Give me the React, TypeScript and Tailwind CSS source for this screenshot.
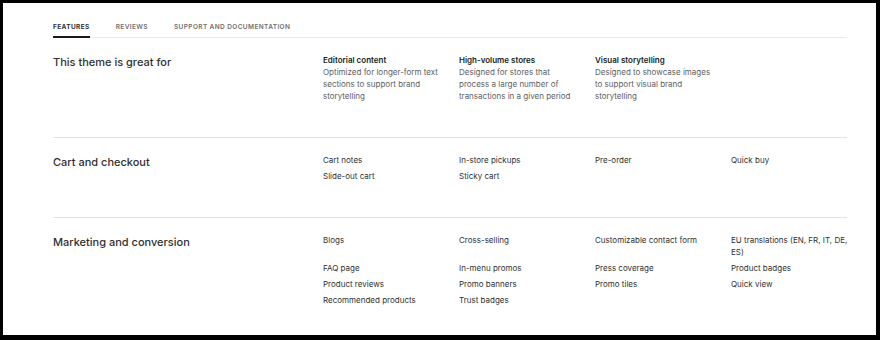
import React from "react";

const highlights = [
  {
    title: "Editorial content",
    text: "Optimized for longer-form text sections to support brand storytelling",
  },
  {
    title: "High-volume stores",
    text: "Designed for stores that process a large number of transactions in a given period",
  },
  {
    title: "Visual storytelling",
    text: "Designed to showcase images to support visual brand storytelling",
  },
];

const cart = ["Cart notes", "In-store pickups", "Pre-order", "Quick buy", "Slide-out cart", "Sticky cart"];

const marketing = [
  "Blogs",
  "Cross-selling",
  "Customizable contact form",
  "EU translations (EN, FR, IT, DE, ES)",
  "FAQ page",
  "In-menu promos",
  "Press coverage",
  "Product badges",
  "Product reviews",
  "Promo banners",
  "Promo tiles",
  "Quick view",
  "Recommended products",
  "Trust badges",
];

const Section = ({ label, children, last }: { label: string; children: React.ReactNode; last?: boolean }) => {
  return (
    <div className={`flex gap-5 pt-4 pb-[35px] ${last ? "" : "border-b border-[#e3e3e3]"}`}>
      <h3 className="w-[250px] shrink-0 text-[11px] leading-4 font-medium text-[#303030]">{label}</h3>
      {children}
    </div>
  );
};

const FeatureList = ({ items }: { items: string[] }) => (
  <ul className="grid grid-cols-[116px_116px_116px_122px] gap-x-5 gap-y-1 text-[8px] leading-3 text-[#303030]">
    {items.map((item) => (
      <li key={item}>{item}</li>
    ))}
  </ul>
);

export default function App() {
  return (
    <div className="w-[880px] h-[340px] bg-black pt-[3px] pl-[3px] pr-[4px] pb-[5px]" style={{ fontFamily: "Inter, 'Noto Sans', sans-serif" }}>
      <div className="h-full bg-white pl-[50px] pr-[29px] pt-[19px]">
        <div className="flex gap-[26px] border-b border-[#ebebeb] text-[6.5px] leading-[10px] font-semibold tracking-[0.06em] uppercase">
          <span className="pb-1 border-b-2 border-[#1a1a1a] -mb-px text-[#303030] font-bold">Features</span>
          <span className="pb-1 text-[#6f6f6f]">Reviews</span>
          <span className="pb-1 text-[#6f6f6f]">Support and documentation</span>
        </div>

        <Section label="This theme is great for">
          <div className="grid grid-cols-[repeat(4,116px)] gap-x-5 text-[8px] leading-3">
            {highlights.map((h) => (
              <div key={h.title}>
                <p className="font-semibold text-[#1a1a1a]">{h.title}</p>
                <p className="text-[#616161]">{h.text}</p>
              </div>
            ))}
          </div>
        </Section>

        <Section label="Cart and checkout">
          <FeatureList items={cart} />
        </Section>

        <Section label="Marketing and conversion" last>
          <FeatureList items={marketing} />
        </Section>
      </div>
    </div>
  );
}
